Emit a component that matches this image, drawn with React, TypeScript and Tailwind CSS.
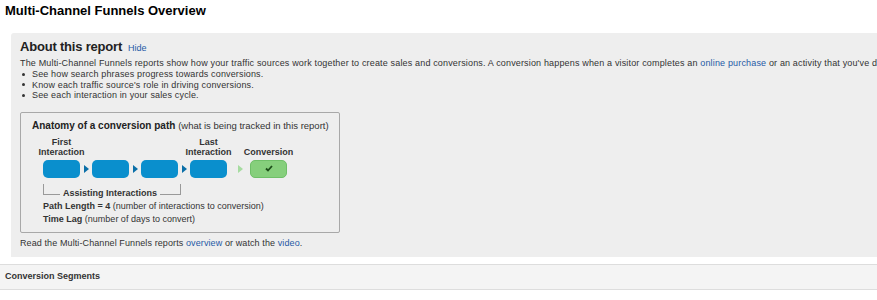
import React from "react";

const font = { fontFamily: '"Liberation Sans", Arial, sans-serif' };

function Arrow({ color, className }: { color: string; className: string }) {
  return (
    <svg width="5" height="8" viewBox="0 0 5 8" className={className}>
      <path d="M0 0 L5 4 L0 8 Z" fill={color} />
    </svg>
  );
}

function Step() {
  return <div className="h-[18px] w-[37px] rounded-[5px] bg-[#0a8fcd]" />;
}

function PathDiagram() {
  return (
    <div className="mt-[11px] w-[320px] rounded-[2px] border border-[#a8a8a8] pl-[11px] pt-[5px] pb-[6px] text-[10px] text-[#333]">
      <div className="whitespace-nowrap">
        <span className="font-bold text-[#222]">Anatomy of a conversion path</span>{" "}
        <span className="text-[9.5px]">(what is being tracked in this report)</span>
      </div>
      <div className="ml-[11px] mt-[4px] flex items-end font-bold text-[#333] text-[9px] leading-[10px]">
        <div className="w-[37px] text-center">
          <div>First</div>
          <div className="-mx-4">Interaction</div>
        </div>
        <div className="w-[110px]" />
        <div className="w-[37px] text-center">
          <div>Last</div>
          <div className="-mx-4">Interaction</div>
        </div>
        <div className="w-[23px]" />
        <div className="w-[37px] text-center">
          <div className="-mx-4">Conversion</div>
        </div>
      </div>
      <div className="ml-[11px] mt-[3px] flex items-center">
        <Step />
        <Arrow color="#0a6fa8" className="ml-[4px] mr-[3px]" />
        <Step />
        <Arrow color="#0a6fa8" className="ml-[4px] mr-[3px]" />
        <Step />
        <Arrow color="#0a6fa8" className="ml-[4px] mr-[3px]" />
        <Step />
        <Arrow color="#a6dca0" className="ml-[11px] mr-[7px]" />
        <div className="flex h-[18px] w-[37px] items-center justify-center rounded-[5px] border border-[#6fbf68] bg-[#86cf7c]">
          <svg width="8" height="7" viewBox="0 0 8 7">
            <path d="M1 3.5 L3 5.5 L7 1" stroke="#1d4d1a" strokeWidth="1.8" fill="none" />
          </svg>
        </div>
      </div>
      <div className="ml-[11px] mt-[6px] flex h-[14px] w-[138px] items-end">
        <div className="mb-[3px] h-[11px] w-[17px] border-b border-l border-[#999]" />
        <div className="px-[3px] font-bold text-[9px] leading-[10px] whitespace-nowrap">Assisting Interactions</div>
        <div className="mb-[3px] h-[11px] flex-1 border-b border-r border-[#999]" />
      </div>
      <div className="ml-[11px] mt-[2px] text-[9px] leading-[13px] whitespace-nowrap">
        <div>
          <span className="font-bold">Path Length = 4</span> (number of interactions to conversion)
        </div>
        <div>
          <span className="font-bold">Time Lag</span> (number of days to convert)
        </div>
      </div>
    </div>
  );
}

export default function App() {
  return (
    <div className="w-[877px] h-[300px] overflow-hidden bg-white text-[#333]" style={font}>
      <h1 className="pl-[5px] pt-[3px] text-[13px] leading-[16px] font-bold text-black">
        Multi-Channel Funnels Overview
      </h1>
      <div className="mt-[14px] ml-[11px] w-[900px] rounded-tl-[3px] bg-[#eeeeee] pl-[9px] pt-[5px] pb-[8px]">
        <div className="flex items-baseline gap-[6px]">
          <span className="text-[13px] leading-[18px] tracking-[-0.2px] font-bold text-[#222]">About this report</span>
          <a className="text-[9px] text-[#1f5aa6]">Hide</a>
        </div>
        <p className="mt-[2px] whitespace-nowrap text-[9px] leading-[11px] tracking-[0.16px]">
          The Multi-Channel Funnels reports show how your traffic sources work together to create sales and
          conversions. A conversion happens when a visitor completes an{" "}
          <a className="text-[#1f5aa6]">online purchase</a> or an activity that you've defined as a goal.
        </p>
        <ul className="text-[9px] leading-[10.5px] tracking-[0.15px]">
          <li className="flex items-center">
            <span className="ml-[2px] mr-[7px] h-[3px] w-[3px] rounded-full bg-[#333]" />
            See how search phrases progress towards conversions.
          </li>
          <li className="flex items-center">
            <span className="ml-[2px] mr-[7px] h-[3px] w-[3px] rounded-full bg-[#333]" />
            Know each traffic source's role in driving conversions.
          </li>
          <li className="flex items-center">
            <span className="ml-[2px] mr-[7px] h-[3px] w-[3px] rounded-full bg-[#333]" />
            See each interaction in your sales cycle.
          </li>
        </ul>
        <PathDiagram />
        <p className="mt-[4px] text-[9px] leading-[12px] tracking-[0.1px]">
          Read the Multi-Channel Funnels reports <a className="text-[#1f5aa6]">overview</a> or watch the{" "}
          <a className="text-[#1f5aa6]">video</a>.
        </p>
      </div>
      <div className="mt-[7px] flex h-[26px] items-center border-y border-[#dddddd] bg-[#f4f4f4] pl-[5px] text-[9px] font-bold text-[#333]">
        Conversion Segments
      </div>
    </div>
  );
}
